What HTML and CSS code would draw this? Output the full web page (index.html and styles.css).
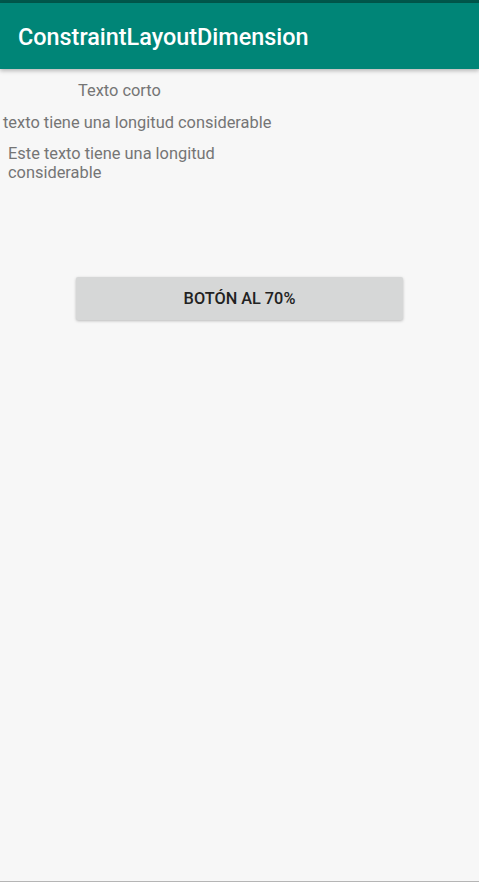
FILE: index.html
```html
<!DOCTYPE html>
<html>
<head>
<meta charset="utf-8">
<link rel="stylesheet" href="styles.css">
</head>
<body>
<div class="status"></div>
<header class="toolbar"><span class="title">ConstraintLayoutDimension</span></header>
<main class="content">
  <div class="t1">Texto corto</div>
  <div class="t2">texto tiene una longitud considerable</div>
  <div class="t3">Este texto tiene una longitud considerable</div>
  <div class="btnrow"><button class="btn">BOTÓN AL 70%</button></div>
</main>
</body>
</html>
```
FILE: styles.css
```css
html, body { margin: 0; padding: 0; }
body {
  width: 479px;
  height: 882px;
  background: #f7f7f7;
  font-family: Roboto, "Noto Sans", sans-serif;
  overflow: hidden;
  position: relative;
  border-bottom: 1px solid #b5b5b5;
  box-sizing: border-box;
}
.status { height: 3px; background: #00574b; }
.toolbar {
  height: 66px;
  box-sizing: border-box;
  padding-top: 2px;
  background: #008577;
  display: flex;
  align-items: center;
  padding-left: 18px;
  box-shadow: 0 2px 4px rgba(0,0,0,0.25);
  position: relative;
  z-index: 1;
}
.title { color: #fff; font-size: 23.4px; font-weight: 500; }
.content { color: #757575; font-size: 16.4px; line-height: 19px; }
.t1 { padding-left: 78px; margin-top: 12px; }
.t2 { padding-left: 3px; margin-top: 13px; white-space: nowrap; }
.t3 { padding-left: 8px; margin-top: 12px; width: 220px; }
.btnrow { display: flex; justify-content: center; margin-top: 95px; }
.btn {
  width: 327px;
  height: 43px;
  background: #d6d7d7;
  border: none;
  border-radius: 2px;
  box-shadow: 0 1px 3px rgba(0,0,0,0.25);
  font-family: Roboto, sans-serif;
  font-weight: 500;
  font-size: 16.3px;
  color: #222;
}
```
